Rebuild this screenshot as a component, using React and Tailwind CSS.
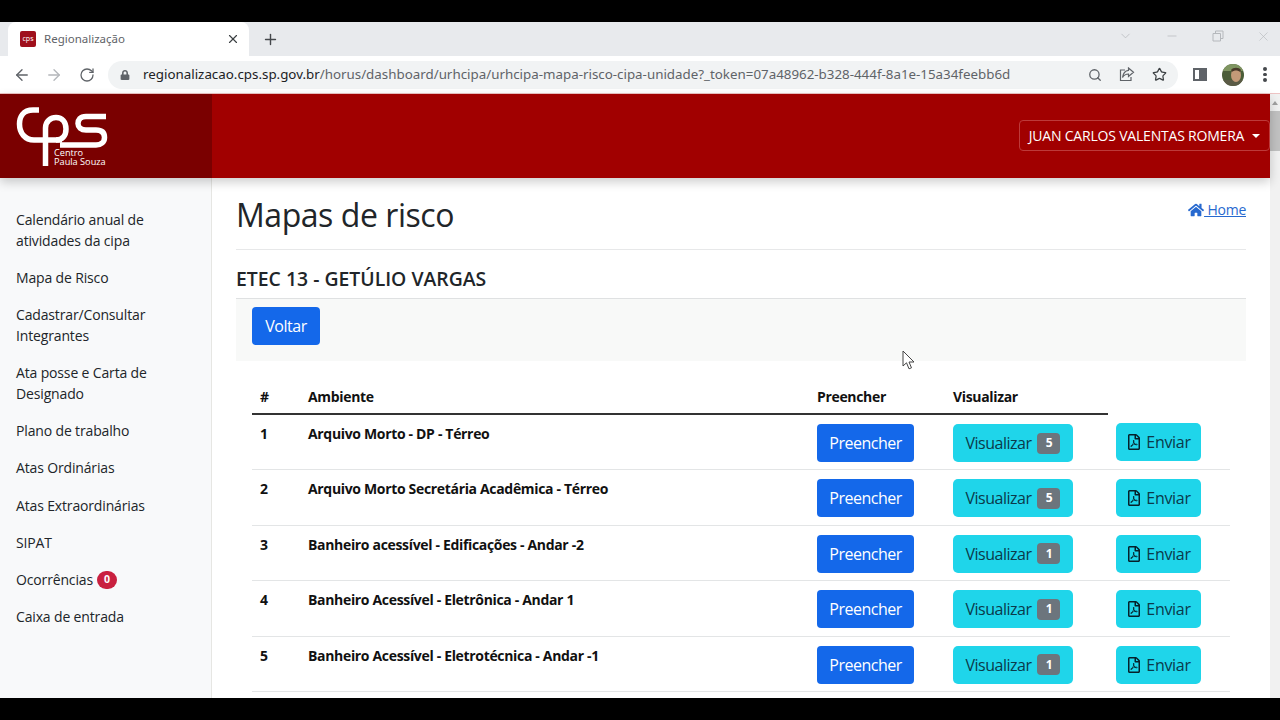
import React from "react";
import { ArrowLeft, ArrowRight, RotateCw, Search, Star, X, Plus, ChevronDown, Minus } from "lucide-react";
import { FaHome, FaRegFilePdf, FaLock } from "react-icons/fa";

const menu = [
  "Calendário anual de atividades da cipa",
  "Mapa de Risco",
  "Cadastrar/Consultar Integrantes",
  "Ata posse e Carta de Designado",
  "Plano de trabalho",
  "Atas Ordinárias",
  "Atas Extraordinárias",
  "SIPAT",
];

const rows = [
  { id: 1, name: "Arquivo Morto - DP - Térreo", total: 5 },
  { id: 2, name: "Arquivo Morto Secretária Acadêmica - Térreo", total: 5 },
  { id: 3, name: "Banheiro acessível - Edificações - Andar -2", total: 1 },
  { id: 4, name: "Banheiro Acessível - Eletrônica - Andar 1", total: 1 },
  { id: 5, name: "Banheiro Acessível - Eletrotécnica - Andar -1", total: 1 },
];

function Logo() {
  return (
    <div className="relative w-[96px] h-[66px]">
      <svg width="96" height="66" viewBox="0 0 96 66" className="block">
        <g fill="none" stroke="#fff" strokeWidth="5.500">
          <path d="M23 4 H17 C7 4 3.500 11 3.500 18 C3.500 27 9 34 18 34 H46" />
          <path d="M29.500 60 V22 C29.500 15 35 11.500 40 11.500 C46 11.500 50 16 50 23 C50 30 46 34 40 34" />
          <path d="M90 10.500 H70 C64 10.500 62 14 62 17.500 C62 21 65 24 70 24 H80 C86 24 88.500 27 88.500 31.500 C88.500 36 85 39 80 39 H44" />
        </g>
      </svg>
      <div className="absolute left-[38px] top-[42px] text-[9.200px] leading-[9px] text-white whitespace-nowrap">
        Centro
        <br />
        Paula Souza
      </div>
    </div>
  );
}

function TabBar() {
  return (
    <div className="h-[34px] bg-[#e8eaed] flex items-start pl-2 text-[#5f6368]">
      <div className="w-[241px] h-[34px] bg-white rounded-t-lg flex items-center pl-3 pr-[9px]">
        <div className="w-[16px] h-[16px] bg-[#9f0f1c] rounded-[2px] flex items-center justify-center text-white text-[7px] font-['Open_Sans',sans-serif]">cps</div>
        <span className="ml-2 text-[11.500px] text-[#5f6368] font-['Noto_Sans',sans-serif]">Regionalização</span>
        <X size={14} strokeWidth={2} className="ml-auto text-[#3c4043]" />
      </div>
      <Plus size={17} strokeWidth={2} className="ml-[13px] mt-[9px] text-[#45484c]" />
      <div className="ml-auto flex items-center gap-[31px] h-[28px] pr-[9px] text-[#b5b8bc]">
        <span className="w-[15px] flex justify-center"><ChevronDown size={16} strokeWidth={1.2} /></span>
        <span className="w-[15px] flex justify-center"><Minus size={14} strokeWidth={1.2} /></span>
        <span className="w-[15px] flex justify-center">
          <svg width="12" height="12" viewBox="0 0 12 12" fill="none" stroke="currentColor"><path d="M1 3.500h7.500V11H1zM3.500 3.500V1H11v7.500H8.500" /></svg>
        </span>
        <span className="w-[15px] flex justify-center"><X size={15} strokeWidth={1} /></span>
      </div>
    </div>
  );
}

function Avatar() {
  return (
    <svg width="22" height="22" viewBox="0 0 22 22" className="ml-[15px] shrink-0 rounded-full">
      <rect width="22" height="22" fill="#4b5d38" />
      <rect width="22" height="7" fill="#7f9561" />
      <rect y="16" width="22" height="6" fill="#5a5a45" />
      <ellipse cx="14" cy="11" rx="5" ry="7" fill="#c49a78" />
      <path d="M9 6c2-3 8-3 10 0l-1 2c-2-2-6-2-8 0z" fill="#4a3a2a" />
    </svg>
  );
}

function Toolbar() {
  return (
    <div className="h-[38px] bg-white flex items-center border-b border-[#eec4c4] text-[#5f6368]">
      <ArrowLeft size={18} strokeWidth={1.8} className="ml-[13px] shrink-0" />
      <ArrowRight size={18} strokeWidth={1.8} className="ml-[14px] shrink-0 text-[#b4b7bb]" />
      <RotateCw size={16} strokeWidth={1.9} className="ml-[16px] shrink-0" />
      <div className="ml-[13px] w-[1070px] shrink-0 h-[28px] rounded-full bg-[#f1f3f4] flex items-center pl-[12px] pr-[11px] text-[13.350px] font-['Noto_Sans',sans-serif]">
        <FaLock size={10} className="text-[#5f6368]" />
        <span className="ml-[13px] text-[#202124] whitespace-nowrap">regionalizacao.cps.sp.gov.br<span className="text-[#5f6368]">/horus/dashboard/urhcipa/urhcipa-mapa-risco-cipa-unidade?_token=07a48962-b328-444f-8a1e-15a34feebb6d</span></span>
        <div className="ml-auto flex items-center gap-[17px] text-[#5f6368]">
          <Search size={14} strokeWidth={2.2} />
          <svg width="16" height="15" viewBox="0 0 16 15" fill="none" stroke="currentColor" strokeWidth="1.200"><path d="M6 3H1.500v10.500h10.500V10" /><path d="M9.500 1l5 4.200-5 4.200V7C7 7 5 8 3.500 10.500 4 7 6 3.800 9.500 3.400z" /></svg>
          <Star size={15} strokeWidth={2} className="text-[#3c4043]" />
        </div>
      </div>
      <div className="ml-[15px] w-[14px] h-[13px] shrink-0 border-2 border-[#5f6368] flex justify-end"><div className="w-[6px] bg-[#5f6368]" /></div>
      <Avatar />
      <div className="ml-[19px] flex flex-col gap-[2px]">
        <span className="w-[3.500px] h-[3.500px] rounded-full bg-[#45484c]" />
        <span className="w-[3.500px] h-[3.500px] rounded-full bg-[#45484c]" />
        <span className="w-[3.500px] h-[3.500px] rounded-full bg-[#45484c]" />
      </div>
    </div>
  );
}

function Sidebar() {
  return (
    <aside className="w-[212px] shrink-0 bg-[#f8f9fa] border-r border-[#e6e6e3] pt-[30.500px] pl-4 pr-2 text-[14px] tracking-[-0.15px] leading-[21px] text-[#212529]">
      {menu.map((item) => (
        <div key={item} className="mb-[16.200px] w-[150px]">{item}</div>
      ))}
      <div className="mb-[16.200px] flex items-center gap-[4px] h-[21px]">
        Ocorrências
        <span className="w-[20px] h-[18px] rounded-full bg-[#c9203f] text-white text-[10.500px] font-bold flex items-center justify-center">0</span>
      </div>
      <div>Caixa de entrada</div>
    </aside>
  );
}

function Row({ row }) {
  return (
    <tr className="h-[55.500px] border-b border-[#e3e5e6] align-top">
      <td className="pl-2 pt-[8px] font-bold">{row.id}</td>
      <td className="pl-2 pt-[8px] font-bold">{row.name}</td>
      <td className="pl-2 pt-[9px]">
        <button className="w-[97px] h-[38px] rounded-[4px] bg-[#1468ea] text-white text-[16px] tracking-[-0.5px]">Preencher</button>
      </td>
      <td className="pl-2 pt-[9px]">
        <button className="w-[120px] h-[38px] rounded-[5px] bg-[#1fd5ea] text-[#0b3a4a] text-[16px] tracking-[-0.5px] flex items-center justify-center gap-[6px]">
          Visualizar
          <span className="w-[23px] h-[21px] rounded-[4px] bg-[#6c757d] text-white text-[12px] font-bold flex items-center justify-center">{row.total}</span>
        </button>
      </td>
      <td className="pl-2 pt-[9px]">
        <button className="w-[85px] h-[38px] rounded-[5px] bg-[#1fd5ea] text-[#0b3a4a] text-[16px] tracking-[-0.3px] flex items-center justify-center gap-[4px]">
          <FaRegFilePdf size={16} className="text-[#06202a]" />
          Enviar
        </button>
      </td>
    </tr>
  );
}

function Content() {
  return (
    <main className="relative flex-1 min-w-0 bg-white px-6 overflow-hidden text-[#212529]">
      <div className="h-[72px] border-b border-[#e7e8e9] flex items-start justify-between">
        <h1 className="text-[32px] tracking-[-0.45px] leading-[38px] mt-[18px] font-medium">Mapas de risco</h1>
        <a className="mt-[21px] flex items-center text-[14px] tracking-[-0.25px] text-[#2769cf] underline whitespace-pre">
          <FaHome size={16} />
          {" Home"}
        </a>
      </div>
      <div className="h-[49px] border-b border-[#dfe1e2] pt-[16px] text-[19.400px] leading-[26px] font-semibold">
        ETEC 13 - GETÚLIO VARGAS
      </div>
      <div className="h-[62px] bg-[#f8f9f8] pl-4 pt-2">
        <button className="w-[68px] h-[38px] rounded-[4px] bg-[#1468ea] text-white text-[16px] tracking-[-0.5px]">Voltar</button>
      </div>
      <div className="px-4 pt-[18px]">
        <table className="w-[978px] table-fixed text-[14px] tracking-[-0.33px] text-[#111]">
          <colgroup>
            <col className="w-[48px]" />
            <col className="w-[509px]" />
            <col className="w-[136px]" />
            <col className="w-[163px]" />
            <col className="w-[122px]" />
          </colgroup>
          <thead>
            <tr className="h-[35px] text-left">
              <th className="pl-2 border-b-2 border-[#333]">#</th>
              <th className="pl-2 border-b-2 border-[#333]">Ambiente</th>
              <th className="pl-2 border-b-2 border-[#333]">Preencher</th>
              <th className="pl-2 border-b-2 border-[#333]">Visualizar</th>
              <th />
            </tr>
          </thead>
          <tbody>
            {rows.map((row) => (
              <Row key={row.id} row={row} />
            ))}
          </tbody>
        </table>
      </div>
      {/* mouse cursor from the recording */}
      <svg width="14" height="20" viewBox="0 0 14 20" className="absolute left-[690px] top-[172px]" fill="#fff" stroke="#444" strokeWidth="1">
        <path d="M1 1v15l3.500-3.200 2.500 6 2.500-1-2.500-5.800H12z" />
      </svg>
    </main>
  );
}

export default function App() {
  return (
    <div className="h-[720px] w-[1280px] overflow-hidden bg-black pt-[22px] pb-[22px] font-['Open_Sans',sans-serif]">
      <TabBar />
      <Toolbar />
      <div className="flex h-[604px] bg-white">
        <div className="flex-1 min-w-0 flex flex-col">
          <header className="h-[84px] shrink-0 flex bg-[#a10000] shadow-[0_4px_10px_rgba(0,0,0,0.2)] z-10">
            <div className="w-[212px] bg-[#7a0000] pl-4 pt-[12px]">
              <Logo />
            </div>
            <button className="ml-auto mt-[26px] w-[251px] h-[31px] rounded-[4px] border border-[#bd3a3a] text-white text-[14px] tracking-[-0.2px] flex items-center justify-center gap-[8px]">
              JUAN CARLOS VALENTAS ROMERA
              <span className="w-0 h-0 border-x-[4px] border-x-transparent border-t-[4px] border-t-white" />
            </button>
          </header>
          <div className="flex flex-1 min-h-0">
            <Sidebar />
            <Content />
          </div>
        </div>
        <div className="w-[10px] shrink-0 bg-[#f1f1f1] flex flex-col items-center pt-[7px]">
          <span className="w-0 h-0 border-x-[3px] border-x-transparent border-b-[4px] border-b-[#a0a0a0]" />
          <div className="mt-[6px] w-full h-[40px] bg-[#c1c1c1]" />
        </div>
      </div>
    </div>
  );
}
